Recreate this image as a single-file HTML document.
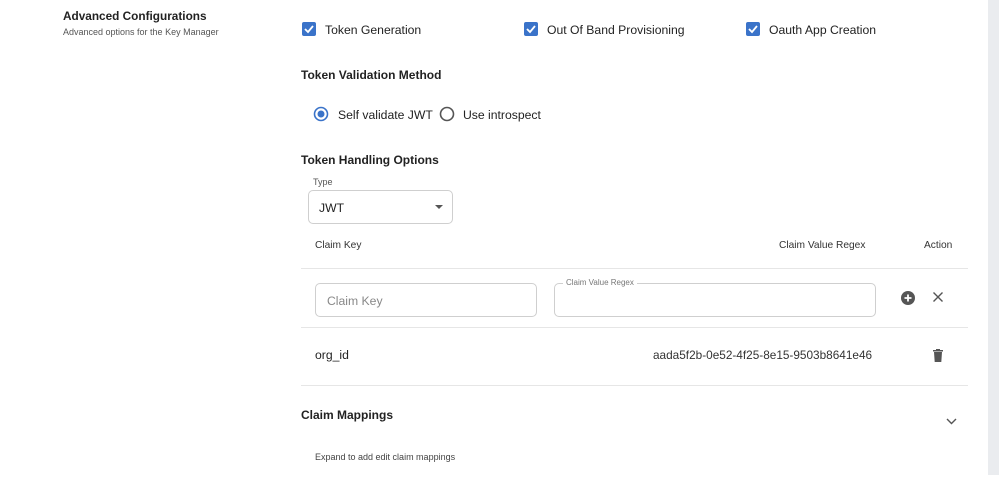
<!DOCTYPE html><html><head><style>
body{margin:0;width:999px;height:500px;background:#fff;font-family:"Liberation Sans",sans-serif;color:#222;position:relative;overflow:hidden}
.a{position:absolute;white-space:nowrap}
.cb{position:absolute;width:14px;height:14px;background:#3a73c9;border-radius:2px}
.cb svg{position:absolute;left:1px;top:1px}
.line{position:absolute;left:301px;width:667px;height:1px;background:#e6e6e6}
.box{position:absolute;border:1px solid #cfcfcf;border-radius:5px;box-sizing:border-box}
.h{font-size:12px;font-weight:bold;color:#222}
</style></head><body>
<div class="a" style="left:988px;top:0;width:11px;height:475px;background:#eaecef"></div>
<div class="a h" style="left:63px;top:9px;font-size:11.8px">Advanced Configurations</div>
<div class="a" style="left:63px;top:27px;font-size:9px;color:#555">Advanced options for the Key Manager</div>

<div class="cb" style="left:302px;top:22px"><svg width="12" height="12"><path d="M2 6l3 3 5-6" stroke="#fff" stroke-width="1.8" fill="none"/></svg></div>
<div class="a" style="left:325px;top:23px;font-size:12.2px">Token Generation</div>
<div class="cb" style="left:524px;top:22px"><svg width="12" height="12"><path d="M2 6l3 3 5-6" stroke="#fff" stroke-width="1.8" fill="none"/></svg></div>
<div class="a" style="left:547px;top:23px;font-size:12.2px">Out Of Band Provisioning</div>
<div class="cb" style="left:746px;top:22px"><svg width="12" height="12"><path d="M2 6l3 3 5-6" stroke="#fff" stroke-width="1.8" fill="none"/></svg></div>
<div class="a" style="left:769px;top:23px;font-size:12.2px">Oauth App Creation</div>

<div class="a h" style="left:301px;top:68px">Token Validation Method</div>
<svg class="a" style="left:313px;top:106px" width="16" height="16"><circle cx="8" cy="8" r="6.5" stroke="#3a73c9" stroke-width="1.6" fill="none"/><circle cx="8" cy="8" r="3.5" fill="#3a73c9"/></svg>
<div class="a" style="left:338px;top:108px;font-size:12.2px">Self validate JWT</div>
<svg class="a" style="left:439px;top:106px" width="16" height="16"><circle cx="8" cy="8" r="6.5" stroke="#555" stroke-width="1.6" fill="none"/></svg>
<div class="a" style="left:463px;top:108px;font-size:12.2px">Use introspect</div>

<div class="a h" style="left:301px;top:153px">Token Handling Options</div>
<div class="a" style="left:313px;top:177px;font-size:9px;color:#555">Type</div>
<div class="box" style="left:308px;top:190px;width:145px;height:34px"></div>
<div class="a" style="left:319px;top:201px;font-size:12.2px">JWT</div>
<svg class="a" style="left:434px;top:204px" width="10" height="6"><path d="M1 1h8l-4 4z" fill="#555"/></svg>

<div class="a" style="left:315px;top:240px;font-size:10.2px;color:#333">Claim Key</div>
<div class="a" style="left:779px;top:240px;font-size:10.2px;color:#333">Claim Value Regex</div>
<div class="a" style="left:924px;top:240px;font-size:10.2px;color:#333">Action</div>
<div class="line" style="top:268px"></div>
<div class="box" style="left:315px;top:283px;width:222px;height:34px"></div>
<div class="a" style="left:327px;top:294px;font-size:12.2px;color:#888">Claim Key</div>
<div class="box" style="left:554px;top:283px;width:322px;height:34px"></div>
<div class="a" style="left:563px;top:278px;font-size:8px;color:#777;background:#fff;padding:0 3px">Claim Value Regex</div>
<svg class="a" style="left:900px;top:290px" width="16" height="16"><circle cx="8" cy="8" r="7" fill="#555"/><path d="M8 4.5v7M4.5 8h7" stroke="#fff" stroke-width="1.8"/></svg>
<svg class="a" style="left:932px;top:291px" width="12" height="12"><path d="M1.5 1.5l9 9M10.5 1.5l-9 9" stroke="#555" stroke-width="1.4"/></svg>
<div class="line" style="top:327px"></div>
<div class="a" style="left:315px;top:348px;font-size:12.2px">org_id</div>
<div class="a" style="left:653px;top:348px;font-size:11.8px;color:#333">aada5f2b-0e52-4f25-8e15-9503b8641e46</div>
<svg class="a" style="left:932px;top:348px" width="12" height="15"><path d="M1 2h10v1.5H1zM4 1h4v1H4zM2 4h8l-.7 10H2.7z" fill="#555"/></svg>
<div class="line" style="top:385px"></div>
<div class="a h" style="left:301px;top:408px">Claim Mappings</div>
<svg class="a" style="left:946px;top:418px" width="11" height="7"><path d="M1 1l4.5 4.5L10 1" stroke="#555" stroke-width="1.4" fill="none"/></svg>
<div class="a" style="left:315px;top:452px;font-size:9px;color:#444">Expand to add edit claim mappings</div>
</body></html>
